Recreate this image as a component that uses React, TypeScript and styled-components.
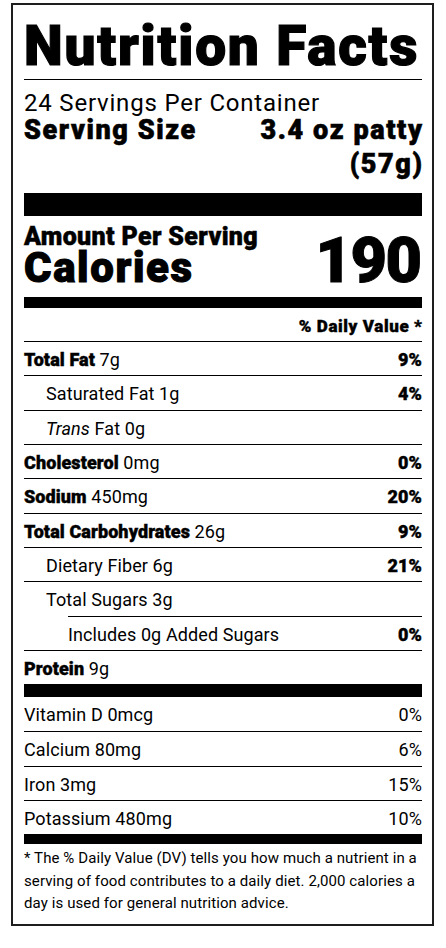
import React from 'react';
import styled, { createGlobalStyle } from 'styled-components';

const GlobalStyle = createGlobalStyle`
  html, body {
    margin: 0;
    padding: 0;
    background: #fff;
  }
  body {
    font-family: Roboto, "Liberation Sans", Arial, sans-serif;
    color: #000;
  }
`;

// no Black weight installed, so bold gets a thin stroke to look heavier
const heavy = (stroke: number) => `
  font-weight: 900;
  -webkit-text-stroke: ${stroke}px #000;
`;

const Label = styled.section`
  box-sizing: border-box;
  width: 423px;
  margin: 3px 0 0 11px;
  padding: 0 10px 9px 11px;
  border: 2px solid #1e1e1e;
  background: #fff;
`;

const Title = styled.h1`
  ${heavy(1.2)}
  margin: 0;
  padding: 14px 0 5px;
  font-size: 55px;
  line-height: 55px;
  letter-spacing: 1.8px;
  white-space: nowrap;
  border-bottom: 1px solid #000;
`;

const Servings = styled.div`
  margin-top: 9px;
  font-size: 24px;
  line-height: 28px;
  letter-spacing: 0.8px;
`;

const SizeRow = styled.div`
  ${heavy(0.6)}
  display: flex;
  justify-content: space-between;
  align-items: flex-start;
  margin-top: -1px;
  font-size: 27px;
  line-height: 28px;
  letter-spacing: 1.6px;
`;

const SizeValue = styled.div`
  margin-right: -1.6px;
  text-align: right;
  & > div + div {
    margin-top: 6px;
  }
`;

const Bar = styled.div<{ $h: number; $mt?: number }>`
  height: ${({ $h }) => $h}px;
  margin-top: ${({ $mt }) => $mt ?? 0}px;
  background: #000;
`;

const CalorieRow = styled.div`
  display: flex;
  justify-content: space-between;
  align-items: flex-end;
  margin-top: 8px;
`;

const Amount = styled.div`
  ${heavy(0.5)}
  font-size: 25px;
  line-height: 25px;
  letter-spacing: 0.35px;
`;

const Calories = styled.div`
  ${heavy(1)}
  font-size: 42px;
  line-height: 38px;
  letter-spacing: 1.6px;
`;

const CalorieValue = styled.div`
  ${heavy(1)}
  margin-right: 1.5px;
  font-size: 63px;
  line-height: 53px;
  letter-spacing: -1.5px;
`;

const DailyHead = styled.div`
  ${heavy(0.4)}
  margin: 8px -0.6px 0 0;
  padding-bottom: 5px;
  text-align: right;
  font-size: 17px;
  line-height: 20px;
  letter-spacing: 0.6px;
`;

const Row = styled.div<{ $indent?: number; $nested?: boolean; $noLine?: boolean; $h?: number }>`
  display: flex;
  justify-content: space-between;
  box-sizing: border-box;
  height: ${({ $h }) => $h ?? 34.33}px;
  margin-left: ${({ $nested }) => ($nested ? 44 : 0)}px;
  padding: 2px 0 0 ${({ $indent }) => $indent ?? 0}px;
  border-top: ${({ $noLine }) => ($noLine ? 'none' : '1px solid #000')};
  font-size: 18px;
  line-height: 31px;
  letter-spacing: 0.1px;
  white-space: nowrap;
`;

const Nutrient = styled.b`
  ${heavy(0.4)}
`;

const Percent = styled.span<{ $bold?: boolean }>`
  ${({ $bold }) => ($bold ? heavy(0.4) : 'font-weight: 400;')}
`;

const Footnote = styled.p`
  margin: 0;
  padding-top: 3px;
  font-size: 15px;
  line-height: 22.5px;
  letter-spacing: 0.1px;
`;

type Item = {
  name: string;
  amount: string;
  dv?: string;
  bold?: boolean;
  indent?: number;
  nested?: boolean;
  italic?: string;
};

const macros: Item[] = [
  { name: 'Total Fat', amount: '7g', dv: '9%', bold: true },
  { name: 'Saturated Fat', amount: '1g', dv: '4%', indent: 22 },
  { name: 'Fat', amount: '0g', indent: 22, italic: 'Trans' },
  { name: 'Cholesterol', amount: '0mg', dv: '0%', bold: true },
  { name: 'Sodium', amount: '450mg', dv: '20%', bold: true },
  { name: 'Total Carbohydrates', amount: '26g', dv: '9%', bold: true },
  { name: 'Dietary Fiber', amount: '6g', dv: '21%', indent: 22 },
  { name: 'Total Sugars', amount: '3g', indent: 22 },
  { name: 'Includes 0g Added Sugars', amount: '', dv: '0%', nested: true },
  { name: 'Protein', amount: '9g', bold: true },
];

const minerals = [
  { name: 'Vitamin D', amount: '0mcg', dv: '0%' },
  { name: 'Calcium', amount: '80mg', dv: '6%' },
  { name: 'Iron', amount: '3mg', dv: '15%' },
  { name: 'Potassium', amount: '480mg', dv: '10%' },
];

export default function App() {
  return (
    <>
      <GlobalStyle />
      <Label>
        <Title>Nutrition Facts</Title>
        <Servings>24 Servings Per Container</Servings>
        <SizeRow>
          <span>Serving Size</span>
          <SizeValue>
            <div>3.4 oz patty</div>
            <div>(57g)</div>
          </SizeValue>
        </SizeRow>
        <Bar $h={23} $mt={15} />
        <CalorieRow>
          <div>
            <Amount>Amount Per Serving</Amount>
            <Calories>Calories</Calories>
          </div>
          <CalorieValue>190</CalorieValue>
        </CalorieRow>
        <Bar $h={11} $mt={10} />
        <DailyHead>% Daily Value *</DailyHead>
        {macros.map((m) => (
          <Row key={m.name} $indent={m.indent} $nested={m.nested}>
            <span>
              {m.italic && <i>{m.italic} </i>}
              {m.bold ? <Nutrient>{m.name}</Nutrient> : m.name}
              {m.amount && ` ${m.amount}`}
            </span>
            {m.dv && <Percent $bold>{m.dv}</Percent>}
          </Row>
        ))}
        <Bar $h={13} />
        {minerals.map((m, i) => (
          <Row key={m.name} $noLine={i === 0} $h={i === 0 ? 34 : 34.33}>
            <span>
              {m.name} {m.amount}
            </span>
            <Percent>{m.dv}</Percent>
          </Row>
        ))}
        <Bar $h={10} />
        <Footnote>
          * The % Daily Value (DV) tells you how much a nutrient in a serving of food
          contributes to a daily diet. 2,000 calories a day is used for general
          nutrition advice.
        </Footnote>
      </Label>
    </>
  );
}
